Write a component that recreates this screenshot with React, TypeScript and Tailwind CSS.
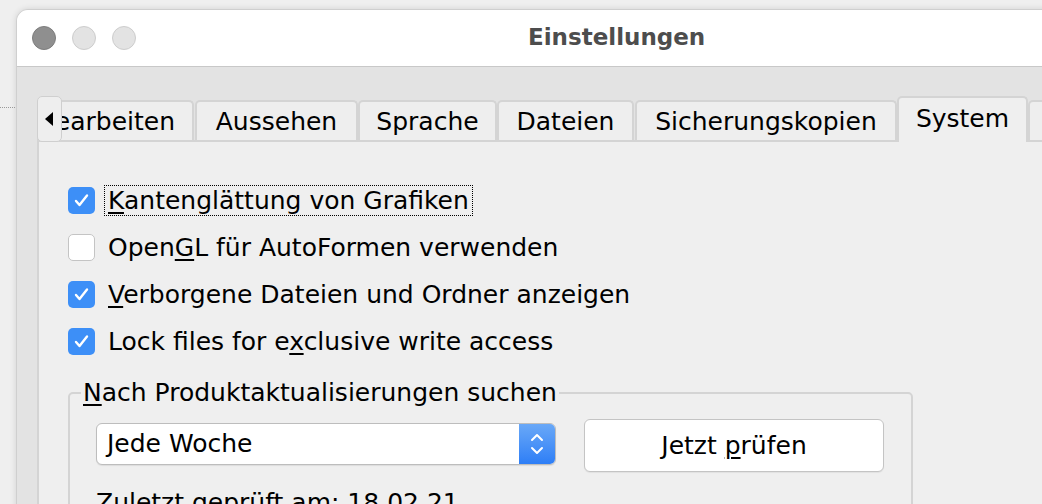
import React from 'react';

const font = { fontFamily: '"DejaVu Sans", "Noto Sans", sans-serif' };

const tabs = [
  { label: 'Aussehen', w: 'w-[163px]', ml: 'ml-[1px]' },
  { label: 'Sprache', w: 'w-[139px]', ml: 'ml-0' },
  { label: 'Dateien', w: 'w-[137px]', ml: 'ml-0' },
  { label: 'Sicherungskopien', w: 'w-[262px]', ml: 'ml-[1px]' },
];

function Check({ on }: { on: boolean }) {
  if (!on) {
    return <div className="w-[27px] h-[27px] rounded-[5px] bg-white border border-[#c4c4c4] shrink-0" />;
  }
  return (
    <div className="w-[27px] h-[27px] rounded-[5px] bg-[#3d8ff7] flex items-center justify-center shrink-0">
      <svg width="19" height="19" viewBox="0 0 19 19">
        <polyline points="4,10 7.5,14 15,4.5" fill="none" stroke="white" strokeWidth="2.4" strokeLinecap="round" strokeLinejoin="round" />
      </svg>
    </div>
  );
}

function U({ children }: { children: React.ReactNode }) {
  return <span className="underline underline-offset-[3px] decoration-[1.5px]">{children}</span>;
}

export default function App() {
  return (
    <div className="w-[1042px] h-[504px] overflow-hidden bg-[#efefef] relative" style={font}>
      {/* kleine gepunktete Linie links */}
      <div className="absolute left-0 top-[107px] w-[15px] border-t border-dotted border-[#9a9a9a]" />

      <div className="ml-[16px] mt-[9px] w-[1200px] h-[520px] rounded-tl-[12px] border border-[#cfcfcf] bg-[#e3e3e3] overflow-hidden shadow-[0_0_6px_rgba(0,0,0,0.12)]">
        {/* Titelleiste */}
        <div className="h-[57px] bg-white border-b border-[#c8c8c8] flex items-center pl-[15px] relative">
          <div className="flex gap-[16px]">
            <div className="w-[24px] h-[24px] rounded-full bg-[#8f8f8f] border border-[#7d7d7d]" />
            <div className="w-[24px] h-[24px] rounded-full bg-[#e3e3e3] border border-[#cdcdcd]" />
            <div className="w-[24px] h-[24px] rounded-full bg-[#e3e3e3] border border-[#cdcdcd]" />
          </div>
          <div className="absolute left-[511px] top-[13px] text-[23px] leading-[28px] font-bold text-[#4d4d4d]">
            Einstellungen
          </div>
        </div>

        {/* Inhalt */}
        <div className="pl-[20px] pt-[29px]">
          {/* Reiter */}
          <div className="relative h-[46px] flex items-end overflow-hidden">
            <div className="flex items-end">
              <div className="w-[157px] h-[42px] bg-[#eeeeee] border-2 border-b-0 border-[#d4d4d4] rounded-t-[5px] flex items-center justify-end pr-[17px] text-[25px] text-black">
                Bearbeiten
              </div>
              {tabs.map((t) => (
                <div
                  key={t.label}
                  className={`${t.w} ${t.ml} h-[42px] bg-[#eeeeee] border-2 border-b-0 border-[#d4d4d4] rounded-t-[5px] flex items-center justify-center text-[25px] text-black`}
                >
                  {t.label}
                </div>
              ))}
              <div className="w-[131px] h-[46px] bg-[#efefef] border-2 border-b-0 border-[#d4d4d4] rounded-t-[5px] flex items-center justify-center text-[25px] text-black relative z-10 pb-[3px]">
                System
              </div>
              <div className="w-[120px] h-[42px] bg-[#eeeeee] border-2 border-b-0 border-[#d4d4d4] rounded-t-[5px]" />
            </div>
            <div className="absolute left-0 top-0 w-[25px] h-[46px] bg-[#eeeeee] border border-[#cfcfcf] rounded-[5px] flex items-center justify-center z-20">
              <svg width="9" height="14" viewBox="0 0 9 14">
                <polygon points="8,0 8,14 0,7" fill="black" />
              </svg>
            </div>
          </div>

          {/* Panel */}
          <div className="bg-[#efefef] border-t-2 border-l-2 border-[#d4d4d4] h-[400px] pl-[29px] pt-[35px] -mt-[2px] relative z-0">
            <div className="flex flex-col text-[25px] text-black">
              <div className="h-[47px] flex items-center gap-[9px]">
                <Check on />
                <span className="border border-dotted border-black px-[3px] leading-[29px]">
                  <U>K</U>antenglättung von Grafiken
                </span>
              </div>
              <div className="h-[47px] flex items-center gap-[13px]">
                <Check on={false} />
                <span>
                  Open<U>G</U>L für AutoFormen verwenden
                </span>
              </div>
              <div className="h-[47px] flex items-center gap-[13px]">
                <Check on />
                <span>
                  <U>V</U>erborgene Dateien und Ordner anzeigen
                </span>
              </div>
              <div className="h-[47px] flex items-center gap-[13px]">
                <Check on />
                <span>
                  Lock files for e<U>x</U>clusive write access
                </span>
              </div>
            </div>

            <fieldset className="mt-[13px] w-[845px] border-2 border-[#d4d4d4] rounded-[5px] text-[25px] text-black">
              <legend className="ml-[11px] px-[2px] leading-[30px]">
                <U>N</U>ach Produktaktualisierungen suchen
              </legend>
              <div className="pl-[26px] pt-[11px] pb-[20px]">
                <div className="flex items-start gap-[28px]">
                  <div className="w-[460px] h-[42px] mt-[4px] bg-white border border-[#bdbdbd] rounded-[6px] flex items-center justify-between overflow-hidden shadow-[0_1px_1px_rgba(0,0,0,0.08)]">
                    <span className="pl-[10px]">Jede Woche</span>
                    <div className="w-[36px] h-full bg-gradient-to-b from-[#69a8f7] to-[#2d7ef6] flex items-center justify-center">
                      <svg width="14" height="26" viewBox="0 0 14 26">
                        <polyline points="2,9 7,4 12,9" fill="none" stroke="white" strokeWidth="2" strokeLinecap="round" strokeLinejoin="round" />
                        <polyline points="2,17 7,22 12,17" fill="none" stroke="white" strokeWidth="2" strokeLinecap="round" strokeLinejoin="round" />
                      </svg>
                    </div>
                  </div>
                  <div className="w-[300px] h-[53px] bg-white border border-[#c4c4c4] rounded-[6px] flex items-center justify-center shadow-[0_1px_1px_rgba(0,0,0,0.06)]">
                    <span>
                      Jetzt <U>p</U>rüfen
                    </span>
                  </div>
                </div>
                <div className="mt-[12px]">Zuletzt geprüft am: 18.02.21</div>
              </div>
            </fieldset>
          </div>
        </div>
      </div>
    </div>
  );
}
